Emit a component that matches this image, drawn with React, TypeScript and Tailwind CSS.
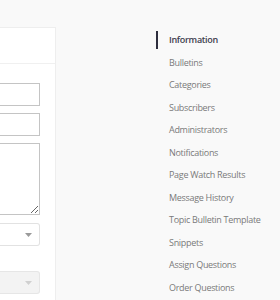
import React from "react";

const items = [
  "Information",
  "Bulletins",
  "Categories",
  "Subscribers",
  "Administrators",
  "Notifications",
  "Page Watch Results",
  "Message History",
  "Topic Bulletin Template",
  "Snippets",
  "Assign Questions",
  "Order Questions",
];

function Caret({ light }: { light?: boolean }) {
  return (
    <svg width="7" height="4" viewBox="0 0 7 4" className="shrink-0">
      <path d="M0 0 L7 0 L3.5 4 Z" fill={light ? "#d0d0d0" : "#9a9a9a"} />
    </svg>
  );
}

export default function App() {
  return (
    <div
      className="w-[280px] h-[300px] overflow-hidden bg-[#f9f9f9] flex"
      style={{ fontFamily: '"Open Sans", sans-serif' }}
    >
      <div className="w-[56px] shrink-0 pt-[27px]">
        <div className="bg-white border-t border-r border-[#eeeeee] h-[300px]">
          <div className="h-[36px] border-b border-[#f0f0f0]" />
          <div className="pr-[15px] pt-[19px] flex flex-col">
            <div className="h-[23px] border border-l-0 border-[#c4c4c4] bg-white" />
            <div className="h-[23px] mt-[7px] border border-l-0 border-[#c4c4c4] bg-white" />
            <textarea
              className="block w-full h-[72px] mt-[7px] border border-l-0 border-[#c4c4c4] bg-white outline-none"
              readOnly
            />
            <div className="h-[23px] mt-[8px] border border-l-0 border-[#e2e2e2] rounded-r-[3px] bg-white flex items-center justify-end pr-[7px]">
              <Caret />
            </div>
            <div className="h-[23px] mt-[25px] border border-l-0 border-[#e6e6e6] rounded-r-[3px] bg-[#f3f3f3] flex items-center justify-end pr-[7px]">
              <Caret light />
            </div>
          </div>
        </div>
      </div>
      <div className="flex-1 pl-[100px] pt-[28.5px]">
        <div className="flex flex-col">
          {items.map((label, i) => (
            <div key={label} className="h-[22.5px] flex items-center">
              <span
                className={
                  "w-[2px] h-[18px] shrink-0 " +
                  (i === 0 ? "bg-[#2e2e3e]" : "bg-transparent")
                }
              />
              <span
                className={
                  "ml-[11px] text-[9px] tracking-[-0.3px] whitespace-nowrap " +
                  (i === 0
                    ? "font-semibold text-[#3d3d4d]"
                    : "text-[#7a7a7a]")
                }
              >
                {label}
              </span>
            </div>
          ))}
        </div>
      </div>
    </div>
  );
}
